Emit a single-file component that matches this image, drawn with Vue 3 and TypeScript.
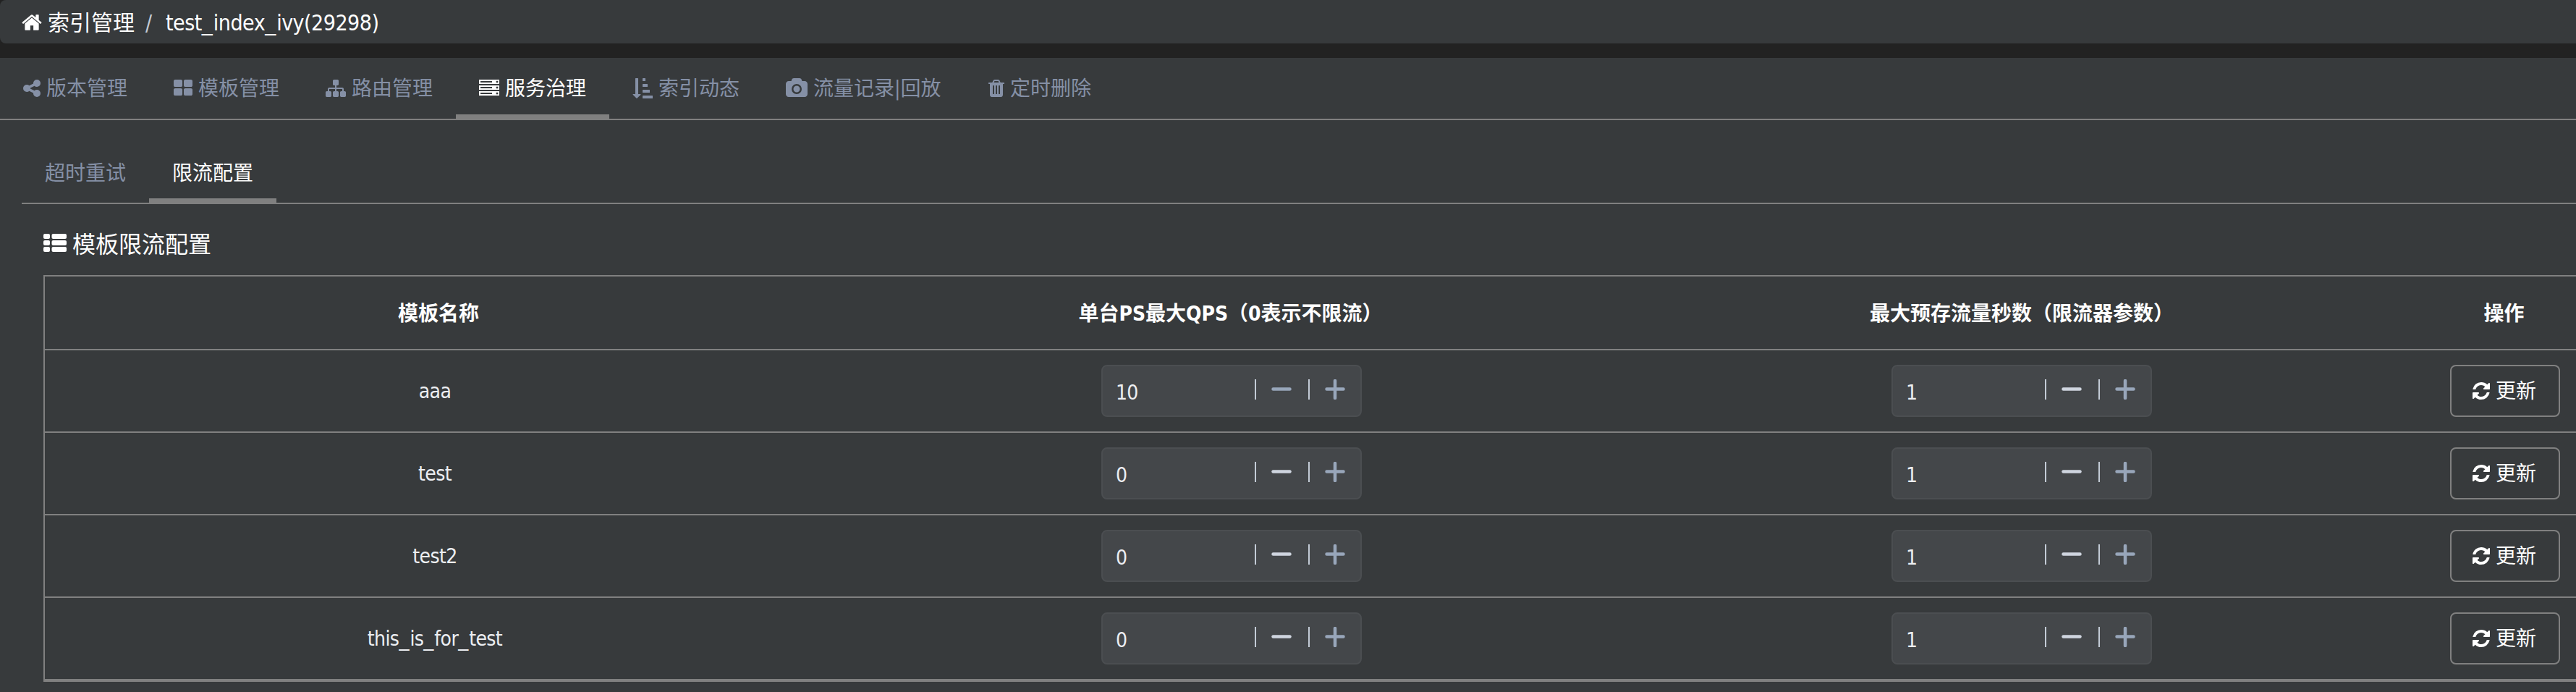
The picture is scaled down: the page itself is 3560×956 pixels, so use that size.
<script setup lang="ts">
interface Tab {
  label: string
  icon: string
  box: string
  width: number
  cell: number
}

interface Row {
  name: string
  qps: number
  seconds: number
}

const homePath =
  'M1472 992v480q0 26-19 45t-45 19h-384v-384h-256v384h-384q-26 0-45-19t-19-45v-480q0-1 .5-3t.5-3l575-474 575 474q1 2 1 6zm223-69l-62 74q-8 9-21 11h-3q-13 0-21-7l-692-577-692 577q-12 8-24 7-13-2-21-11l-62-74q-8-10-7-23.5t11-21.5l719-599q32-26 76-26t76 26l244 204v-195q0-14 9-23t23-9h192q14 0 23 9t9 23v408l219 182q10 8 11 21.5t-7 23.5z'
const refreshPath =
  'M1639 1056q0 5-1 7-64 268-268 434.5t-478 166.5q-146 0-282.5-55t-243.5-157l-129 129q-19 19-45 19t-45-19-19-45v-448q0-26 19-45t45-19h448q26 0 45 19t19 45-19 45l-137 137q71 66 161 102t187 36q134 0 250-65t186-179q11-17 53-117 8-23 30-23h192q13 0 22.5 9.5t9.5 22.5zm25-800v448q0 26-19 45t-45 19h-448q-26 0-45-19t-19-45 19-45l138-138q-148-137-349-137-134 0-250 65t-186 179q-11 17-53 117-8 23-30 23h-199q-13 0-22.5-9.5t-9.5-22.5v-7q65-268 270-434.5t480-166.5q146 0 284 55.5t245 156.5l130-129q19-19 45-19t45 19 19 45z'

const tabs: Tab[] = [
  {
    label: '版本管理', width: 24, cell: 208, box: '128 0 1536 1792',
    icon: 'M1344 1024q133 0 226.5 93.5t93.5 226.5-93.5 226.5-226.5 93.5-226.5-93.5-93.5-226.5q0-12 2-34l-360-180q-92 86-218 86-133 0-226.5-93.5t-93.5-226.5 93.5-226.5 226.5-93.5q126 0 218 86l360-180q-2-22-2-34 0-133 93.5-226.5t226.5-93.5 226.5 93.5 93.5 226.5-93.5 226.5-226.5 93.5q-126 0-218-86l-360 180q2 22 2 34t-2 34l360 180q92-86 218-86z',
  },
  {
    label: '模板管理', width: 26, cell: 210, box: '64 0 1664 1792',
    icon: 'M832 1024v384q0 52-38 90t-90 38h-512q-52 0-90-38t-38-90v-384q0-52 38-90t90-38h512q52 0 90 38t38 90zm0-768v384q0 52-38 90t-90 38h-512q-52 0-90-38t-38-90v-384q0-52 38-90t90-38h512q52 0 90 38t38 90zm896 768v384q0 52-38 90t-90 38h-512q-52 0-90-38t-38-90v-384q0-52 38-90t90-38h512q52 0 90 38t38 90zm0-768v384q0 52-38 90t-90 38h-512q-52 0-90-38t-38-90v-384q0-52 38-90t90-38h512q52 0 90 38t38 90z',
  },
  {
    label: '路由管理', width: 28, cell: 212, box: '0 0 1792 1792',
    icon: 'M1792 1248v320q0 40-28 68t-68 28h-320q-40 0-68-28t-28-68v-320q0-40 28-68t68-28h96v-192h-512v192h96q40 0 68 28t28 68v320q0 40-28 68t-68 28h-320q-40 0-68-28t-28-68v-320q0-40 28-68t68-28h96v-192h-512v192h96q40 0 68 28t28 68v320q0 40-28 68t-68 28h-320q-40 0-68-28t-28-68v-320q0-40 28-68t68-28h96v-192q0-52 38-90t90-38h512v-192h-96q-40 0-68-28t-28-68v-320q0-40 28-68t68-28h320q40 0 68 28t28 68v320q0 40-28 68t-68 28h-96v192h512q52 0 90 38t38 90v192h96q40 0 68 28t28 68z',
  },
  {
    label: '服务治理', width: 28, cell: 212, box: '0 0 1792 1792',
    icon: 'M128 1408h1024v-128h-1024v128zm0-512h1024v-128h-1024v128zm1568 448q0-40-28-68t-68-28-68 28-28 68 28 68 68 28 68-28 28-68zm-1568-960h1024v-128h-1024v128zm1568 448q0-40-28-68t-68-28-68 28-28 68 28 68 68 28 68-28 28-68zm0-512q0-40-28-68t-68-28-68 28-28 68 28 68 68 28 68-28 28-68zm96 832v384h-1792v-384h1792zm0-512v384h-1792v-384h1792zm0-512v384h-1792v-384h1792z',
  },
  {
    label: '索引动态', width: 28, cell: 212, box: '0 0 1792 1792',
    icon: 'M736 1440q0 12-10 24l-319 319q-10 9-23 9-12 0-23-9l-320-320q-15-16-7-35 8-20 30-20h192v-1376q0-14 9-23t23-9h192q14 0 23 9t9 23v1376h192q14 0 23 9t9 23zM928 0h192q32 0 32 32v192q0 32-32 32h-192q-32 0-32-32v-192q0-32 32-32zm0 512h384q32 0 32 32v192q0 32-32 32h-384q-32 0-32-32v-192q0-32 32-32zm0 512h576q32 0 32 32v192q0 32-32 32h-576q-32 0-32-32v-192q0-32 32-32zm0 512h832q32 0 32 32v192q0 32-32 32h-832q-32 0-32-32v-192q0-32 32-32z',
  },
  {
    label: '流量记录|回放', width: 30, cell: 280, box: '0 0 1920 1792',
    icon: 'M960 672q119 0 203.5 84.5t84.5 203.5-84.5 203.5-203.5 84.5-203.5-84.5-84.5-203.5 84.5-203.5 203.5-84.5zm704-416q106 0 181 75t75 181v896q0 106-75 181t-181 75h-1408q-106 0-181-75t-75-181v-896q0-106 75-181t181-75h224l51-136q19-49 69.5-84.5t103.5-35.5h512q53 0 103.5 35.5t69.5 84.5l51 136h224zm-704 1152q185 0 316.5-131.5t131.5-316.5-131.5-316.5-316.5-131.5-316.5 131.5-131.5 316.5 131.5 316.5 316.5 131.5z',
  },
  {
    label: '定时删除', width: 22, cell: 206, box: '192 0 1408 1792',
    icon: 'M704 1376v-704q0-14-9-23t-23-9h-64q-14 0-23 9t-9 23v704q0 14 9 23t23 9h64q14 0 23-9t9-23zm256 0v-704q0-14-9-23t-23-9h-64q-14 0-23 9t-9 23v704q0 14 9 23t23 9h64q14 0 23-9t9-23zm256 0v-704q0-14-9-23t-23-9h-64q-14 0-23 9t-9 23v704q0 14 9 23t23 9h64q14 0 23-9t9-23zm-544-992h448l-48-117q-7-9-17-11h-317q-10 2-17 11zm928 32v64q0 14-9 23t-23 9h-96v948q0 83-47 143.5t-113 60.5h-832q-66 0-113-58.5t-47-141.5v-952h-96q-14 0-23-9t-9-23v-64q0-14 9-23t23-9h309l70-167q15-37 54-63t79-26h320q40 0 79 26t54 63l70 167h309q14 0 23 9t9 23z',
  },
]
const activeTab = 3

const subTabs: string[] = ['超时重试', '限流配置']
const activeSubTab = 1

const columns: string[] = ['模板名称', '单台PS最大QPS（0表示不限流）', '最大预存流量秒数（限流器参数）', '操作']

const rows: Row[] = [
  { name: 'aaa', qps: 10, seconds: 1 },
  { name: 'test', qps: 0, seconds: 1 },
  { name: 'test2', qps: 0, seconds: 1 },
  { name: 'this_is_for_test', qps: 0, seconds: 1 },
]

// Splits an identifier so its underscores can be set wider than its letters.
const parts = (name: string): string[] => name.split(/(_)/)

const indexName = 'test_index_ivy(29298)'

const fields = (row: Row): { value: number; atMin: boolean }[] => [
  { value: row.qps, atMin: row.qps <= 0 },
  { value: row.seconds, atMin: row.seconds <= 1 },
]
</script>

<template>
  <div class="page">
    <header class="crumbs">
      <svg class="home" viewBox="64 0 1664 1792"><path :d="homePath" /></svg>
      <span class="crumb-root">索引管理</span>
      <span class="slash">/</span>
      <span class="crumb-name"><span v-for="(p, i) in parts(indexName)" :key="i" :class="{ under: p === '_' }">{{ p }}</span></span>
    </header>

    <main class="panel">
      <nav class="tabs">
        <a
          v-for="(tab, i) in tabs"
          :key="tab.label"
          class="tab"
          :class="{ active: i === activeTab }"
          :style="{ width: tab.cell + 'px' }"
        >
          <svg :viewBox="tab.box" :style="{ width: tab.width + 'px' }"><path :d="tab.icon" /></svg>
          <span class="label">{{ tab.label }}</span>
        </a>
      </nav>

      <section class="content">
        <nav class="subtabs">
          <a v-for="(label, i) in subTabs" :key="label" class="subtab" :class="{ active: i === activeSubTab }">{{ label }}</a>
        </nav>

        <h2 class="title">
          <svg viewBox="0 0 32 26">
            <g v-for="n in 3" :key="n">
              <rect x="0" :y="(n - 1) * 9" width="9" height="7" rx="2" />
              <rect x="11.5" :y="(n - 1) * 9" width="20.5" height="7" rx="2" />
            </g>
          </svg>
          <span>模板限流配置</span>
        </h2>

        <div class="table">
          <div class="row head">
            <div v-for="c in columns" :key="c" class="cell">{{ c }}</div>
          </div>
          <div v-for="row in rows" :key="row.name" class="row">
            <div class="cell name"><span v-for="(p, i) in parts(row.name)" :key="i" :class="{ under: p === '_' }">{{ p }}</span></div>
            <div v-for="(field, i) in fields(row)" :key="i" class="cell">
              <div class="number">
                <span class="value">{{ field.value }}</span>
                <i class="bar"></i>
                <svg class="op" :class="{ off: field.atMin }" viewBox="0 0 28 28"><path d="M2.5 13.5h23" /></svg>
                <i class="bar"></i>
                <svg class="op" viewBox="0 0 28 28"><path d="M2.5 13.5h23M14 2v24" /></svg>
              </div>
            </div>
            <div class="cell">
              <button class="update" type="button">
                <svg viewBox="128 0 1536 1792"><path :d="refreshPath" /></svg>
                <span class="label">更新</span>
              </button>
            </div>
          </div>
        </div>
      </section>
    </main>
  </div>
</template>

<style>
body {
  background: #222222;
  overflow: hidden;
}
</style>

<style scoped>
.page {
  width: 3560px;
  height: 956px;
  overflow: hidden;
  background: #222222;
  color: #ffffff;
  font-family: "DejaVu Sans Condensed", "Noto Sans CJK SC", sans-serif;
  font-size: 28px;
  line-height: 40px;
}
.page * {
  box-sizing: border-box;
}
svg {
  display: block;
  flex: none;
  fill: currentColor;
}
span {
  white-space: nowrap;
}
.label {
  padding-top: 2px;
}
.under {
  font-family: "DejaVu Sans", sans-serif;
  letter-spacing: 1px;
}
.crumbs {
  display: flex;
  align-items: center;
  height: 60px;
  padding: 2px 0 0 30px;
  border-radius: 8px 0 0 8px;
  background: #373a3c;
  font-size: 30px;
}
.home {
  width: 28px;
  height: 30px;
}
.crumb-root {
  width: 120px;
  margin-left: 8px;
  padding-top: 2px;
}
.slash {
  width: 12px;
  margin-left: 15px;
  padding-top: 1px;
  color: #c3cbd6;
}
.crumb-name {
  margin-left: 16px;
  padding-top: 1px;
  letter-spacing: -0.5px;
}
.panel {
  height: 876px;
  margin-top: 20px;
  background: #373a3c;
}
.tabs {
  display: flex;
  height: 86px;
  border-bottom: 2px solid #808080;
}
.tab {
  display: flex;
  align-items: center;
  height: 84px;
  padding-left: 32px;
  color: #8590a6;
}
.tab svg {
  height: 28px;
  margin-right: 8px;
}
.tab.active,
.subtab.active {
  color: #ffffff;
  border-bottom: 6px solid #808080;
}
.tab.active {
  padding-top: 6px;
}
.content {
  padding-left: 30px;
}
.subtabs {
  display: flex;
  height: 116px;
  padding-top: 30px;
  border-bottom: 2px solid #808080;
}
.subtab {
  width: 176px;
  height: 84px;
  padding-left: 32px;
  line-height: 87px;
  color: #8590a6;
}
.title {
  display: flex;
  align-items: center;
  height: 98px;
  margin: 0;
  padding: 9px 0 0 30px;
  font-size: 32px;
  font-weight: 400;
}
.title svg {
  width: 32px;
  height: 26px;
  margin-right: 8px;
}
.title span {
  padding-top: 4px;
}
.table {
  width: 3524px;
  margin-left: 30px;
  border: 2px solid #808080;
}
.row {
  display: grid;
  grid-template-columns: 1094px 1092px 1092px 244px;
  height: 114px;
  border-bottom: 2px solid #808080;
}
.head {
  height: 102px;
  font-weight: 700;
}
.cell {
  display: flex;
  align-items: center;
  justify-content: center;
}
.head .cell {
  padding: 3px 3px 0 0;
}
.head .cell:first-child {
  padding-right: 6px;
}
.head .cell:nth-child(3) {
  padding-right: 0;
}
.name {
  padding: 2px 16px 0 0;
  color: #eceef2;
  letter-spacing: -0.6px;
}
.number {
  display: flex;
  align-items: center;
  width: 360px;
  height: 72px;
  padding: 0 21px 4px 18px;
  border: 2px solid #4b4e51;
  border-radius: 8px;
  background: #44474a;
  color: #eceef2;
}
.value {
  flex: 1;
  padding-top: 10px;
  letter-spacing: -0.8px;
}
.bar {
  width: 2px;
  height: 28px;
  background: #c3cbd6;
}
.op {
  width: 28px;
  height: 28px;
  margin: 0 23px 0 21px;
  fill: none;
  stroke: #98a6ba;
  stroke-width: 4.5;
  stroke-linecap: round;
}
.op:last-child {
  margin-right: 0;
}
.op.off {
  stroke: #cfd5df;
}
.update {
  display: flex;
  align-items: center;
  width: 152px;
  height: 72px;
  padding: 0 0 0 29px;
  border: 2px solid #808080;
  border-radius: 8px;
  background: none;
  color: #ffffff;
  font: inherit;
}
.update svg {
  width: 24px;
  height: 28px;
  margin-right: 8px;
}
</style>
